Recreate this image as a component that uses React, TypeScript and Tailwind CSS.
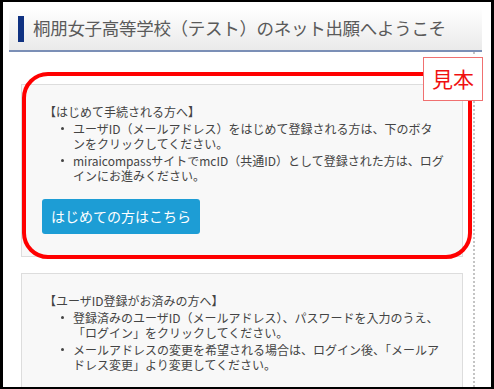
import React from "react";

const jp = "font-['Noto_Sans_CJK_JP','Noto_Sans',sans-serif]";

type Section = {
  title: string;
  items: string[];
  button?: string;
};

const sections: Section[] = [
  {
    title: "【はじめて手続される方へ】",
    items: [
      "ユーザID（メールアドレス）をはじめて登録される方は、下のボタンをクリックしてください。",
      "miraicompassサイトでmcID（共通ID）として登録された方は、ログインにお進みください。",
    ],
    button: "はじめての方はこちら",
  },
  {
    title: "【ユーザID登録がお済みの方へ】",
    items: [
      "登録済みのユーザID（メールアドレス）、パスワードを入力のうえ、「ログイン」をクリックしてください。",
      "メールアドレスの変更を希望される場合は、ログイン後、「メールアドレス変更」より変更してください。",
    ],
  },
];

function Panel({ section }: { section: Section }) {
  return (
    <div className="border border-[#dddddd] bg-[#f8f8f8] pb-[22px] pl-[22px] pr-[18px] pt-[19px]">
      <p className="text-[12px] leading-[16px] text-[#444]">{section.title}</p>
      <ul className="mt-[1px] flex flex-col gap-[2px] pl-[29px] text-[12px] leading-[15px] text-[#444]">
        {section.items.map((t) => (
          <li key={t} className="relative">
            <span className="absolute left-[-12px] top-[6px] h-[3px] w-[3px] rounded-full bg-[#444]" />
            {t}
          </li>
        ))}
      </ul>
      {section.button && (
        <button
          type="button"
          className="ml-[-2px] mt-[16px] h-[35px] w-[158px] rounded-[3px] bg-[#1d9dd5] text-[14px] text-white"
        >
          {section.button}
        </button>
      )}
    </div>
  );
}

export default function App() {
  return (
    <div className={`h-[389px] w-[494px] bg-black pb-[2px] pl-[3px] pr-[3px] pt-[2px] ${jp}`}>
      <div className="relative h-[385px] w-[488px] overflow-hidden bg-white">
        {/* page header */}
        <div className="ml-[6px] mt-[5px] flex h-[45px] w-[473px] items-center border-b-2 border-[#7b8fb6] bg-gradient-to-b from-white to-[#eaeaea]">
          <span className="ml-[9px] h-[26px] w-[6px] bg-[#103282]" />
          <h1 className="ml-[9px] text-[17.5px] tracking-[-0.3px] text-[#5a5a5a]">
            桐朋女子高等学校（テスト）のネット出願へようこそ
          </h1>
        </div>

        {/* content column */}
        <div className="ml-[6px] w-[466px] border-r-2 border-dotted border-[#c4c4c4] pb-4 pl-[12px] pr-[10px] pt-[32px]">
          <div className="flex flex-col gap-[16px]">
            {sections.map((s) => (
              <Panel key={s.title} section={s} />
            ))}
          </div>
        </div>

        {/* sample annotation */}
        <div className="pointer-events-none absolute left-[19px] top-[70px] h-[187px] w-[450px] rounded-[26px] border-4 border-[#ff0000]" />
        <div className="absolute left-[420px] top-[55px] flex h-[44px] w-[60px] items-center justify-center border border-[#f07070] bg-white text-[21px] text-[#f01010]">
          見本
        </div>
      </div>
    </div>
  );
}
